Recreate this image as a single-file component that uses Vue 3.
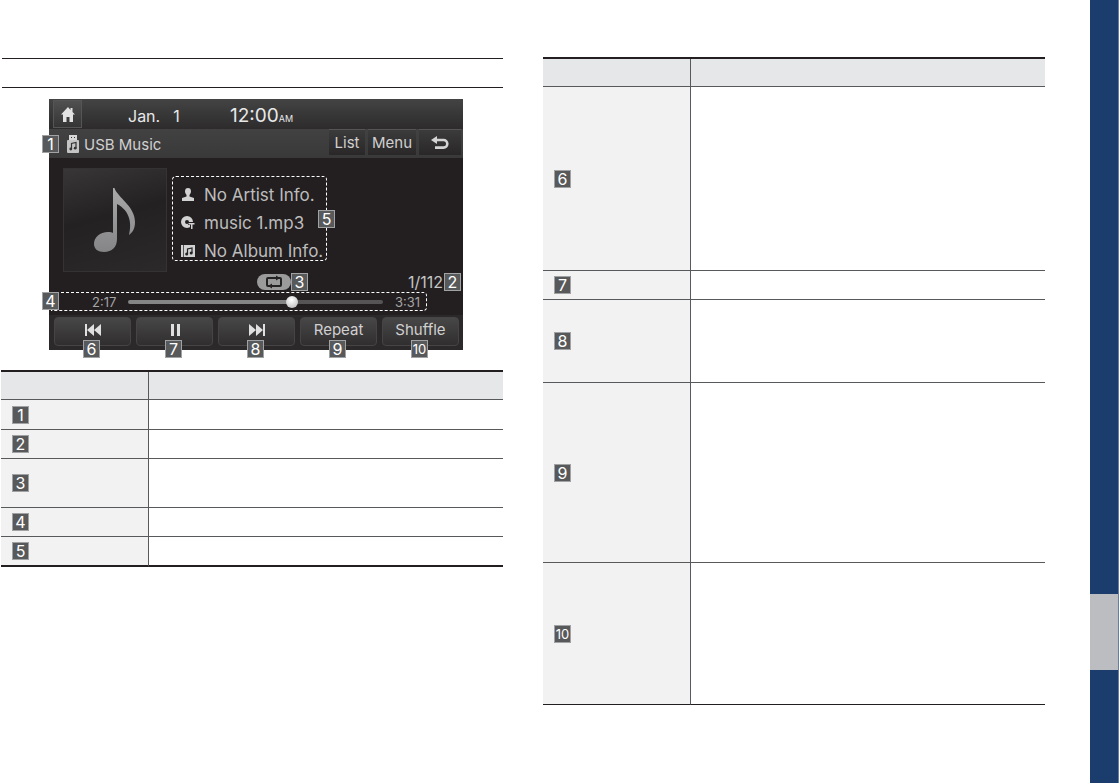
<template>
  <div class="page">
    <main class="content">
      <section class="column">
        <div class="heading"></div>

        <div class="screen">
          <header class="status">
            <button class="home" aria-label="Home">
              <svg width="14" height="15" viewBox="0 0 14 15"><path d="M7 0 0 7.500h2V15h3.500v-5h3v5H12V7.500h2L11.500 5V1H9.500v2z" fill="#e2e2e2" /></svg>
            </button>
            <span class="date"><span>Jan.</span><span>1</span></span>
            <span class="clock">12:00<small>AM</small></span>
          </header>

          <div class="source">
            <span class="badge on-edge">1</span>
            <svg width="12" height="18" viewBox="0 0 12 18">
              <path d="M2 0h8v5H2z" fill="#d8d8d8" />
              <path d="M4 2h1v1H4zM7 2h1v1H7z" fill="#333" />
              <rect y="5" width="12" height="13" rx="1" fill="#c4c4c4" />
              <path d="M4.500 14V8.500L9 7.500V13" fill="none" stroke="#333" stroke-width="1.200" />
              <circle cx="3.800" cy="14" r="1.400" fill="#333" /><circle cx="8.200" cy="13.200" r="1.400" fill="#333" />
            </svg>
            <span class="source-name">USB Music</span>
            <button class="tab list">List</button>
            <button class="tab menu">Menu</button>
            <button class="tab back" aria-label="Back">
              <svg width="18" height="14" viewBox="0 0 18 14"><path d="M4 4h8.500a3.800 3.800 0 0 1 0 7.600H4" fill="none" stroke="#d4d4d4" stroke-width="2.600" /><path d="M0 4 6 0v8z" fill="#d4d4d4" /></svg>
            </button>
          </div>

          <div class="now-playing">
            <div class="cover">
              <svg width="42" height="65" viewBox="0 0 42 65">
                <defs>
                  <linearGradient id="note" x1="0" y1="0" x2="0" y2="1"><stop offset="0" stop-color="#a9a9aa" /><stop offset="1" stop-color="#858587" /></linearGradient>
                </defs>
                <path d="M19 0h1.500C23 9 41 18 41 34c0 6-2 10-6 13 3-12 1-24-12-31v35c0 8-5 13-13 13C4 64 0 61 0 56c0-7 6-12 14-12 2 0 4 0 5 1z" fill="url(#note)" />
              </svg>
            </div>
            <ul class="info">
              <li>
                <svg width="14" height="14" viewBox="0 0 14 14"><path d="M4 3.500C4 1 5 0 7 0s3 1 3 3.500C10 5 9 6 8.500 7v1.500L13 10v3H1v-3l4.500-1.500V7C5 6 4 5 4 3.500z" fill="#d2d2d2" /></svg>
                No Artist Info.
              </li>
              <li>
                <svg width="14" height="14" viewBox="0 0 14 14"><circle cx="6" cy="6" r="4" fill="none" stroke="#d2d2d2" stroke-width="4" /><path d="M7 6h7v3h-2v5H9V9H7z" fill="#231f20" /><path d="M7.500 7h6v1.500h-2V13h-1.500V8.500H7.500z" fill="#d2d2d2" /></svg>
                music 1.mp3
                <span class="badge on-info">5</span>
              </li>
              <li>
                <svg width="14" height="14" viewBox="0 0 14 14"><path d="M0 1h14v12H0z" fill="#d2d2d2" /><path d="M2 1h1v12H2z" fill="#555" /><path d="M6.500 10V5L11 4v5" fill="none" stroke="#222" stroke-width="1.200" /><circle cx="5.700" cy="10" r="1.500" fill="#222" /><circle cx="10.200" cy="9" r="1.500" fill="#222" /></svg>
                No Album Info.
              </li>
            </ul>
          </div>

          <div class="track-state">
            <svg width="34" height="16" viewBox="0 0 34 16">
              <rect width="34" height="16" rx="8" fill="#9b9b9c" />
              <rect x="10" y="4" width="14" height="8" rx="1" fill="none" stroke="#242223" stroke-width="2" />
              <path d="M19 1.500v5l4-2.500zM15 9.500v5l-4-2.500z" fill="#242223" />
            </svg>
            <span class="badge">3</span>
            <span class="count">1/112</span>
            <span class="badge">2</span>
          </div>

          <div class="progress">
            <span class="badge on-progress">4</span>
            <span>2:17</span>
            <input v-model="position" type="range" min="0" max="211" aria-label="Playback position">
            <span>3:31</span>
          </div>

          <div class="controls">
            <button v-for="c in controls" :key="c.badge" :aria-label="c.name">
              <svg v-if="c.icon" width="16" height="14" viewBox="0 0 16 14"><path :d="c.icon" fill="#e0e0e0" /></svg>
              <template v-else>{{ c.name }}</template>
              <span class="badge on-control" :class="{ wide: c.badge > 9 }">{{ c.badge }}</span>
            </button>
          </div>
        </div>

        <table>
          <thead>
            <tr><th></th><th></th></tr>
          </thead>
          <tbody>
            <tr v-for="r in screenRows" :key="r.id" :style="{ height: r.height + 'px' }">
              <td><span class="badge">{{ r.id }}</span></td>
              <td></td>
            </tr>
          </tbody>
        </table>
      </section>

      <section class="column">
        <table class="thin-end">
          <thead>
            <tr><th></th><th></th></tr>
          </thead>
          <tbody>
            <tr v-for="r in controlRows" :key="r.id" :style="{ height: r.height + 'px' }">
              <td><span class="badge" :class="{ wide: r.id > 9 }">{{ r.id }}</span></td>
              <td></td>
            </tr>
          </tbody>
        </table>
      </section>
    </main>
    <aside class="edge"><div class="marker"></div></aside>
  </div>
</template>

<script setup>
import { ref } from 'vue'

const position = ref(137)

const controls = [
  { badge: 6, name: 'Previous', icon: 'M0 1h2v12H0zM9 1v12L2 7zM16 1v12L9 7z' },
  { badge: 7, name: 'Pause', icon: 'M4 1h3v12H4zM10 1h3v12h-3z' },
  { badge: 8, name: 'Next', icon: 'M0 1v12l7-6zM7 1v12l7-6zM14 1h2v12h-2z' },
  { badge: 9, name: 'Repeat' },
  { badge: 10, name: 'Shuffle' },
]

const screenRows = [
  { id: 1, height: 30 },
  { id: 2, height: 29 },
  { id: 3, height: 49 },
  { id: 4, height: 29 },
  { id: 5, height: 30 },
]

const controlRows = [
  { id: 6, height: 184 },
  { id: 7, height: 29 },
  { id: 8, height: 83 },
  { id: 9, height: 180 },
  { id: 10, height: 142 },
]
</script>

<style>
body { margin: 0; background: #fff; }
</style>

<style scoped>
* { box-sizing: border-box; }
.page {
  display: flex; min-height: 100vh;
  font-family: Inter, "Liberation Sans", sans-serif;
}
.content {
  flex: 1; display: grid; grid-template-columns: 1fr 1fr; gap: 40px;
  align-items: start; padding: 57px 45px 0 1px;
}
.heading {
  height: 30px; margin: 1px 0 11px 1px;
  border: solid #231f20; border-width: 1px 0;
}
.edge {
  display: flex; flex-direction: column; justify-content: flex-end;
  width: 29px; padding-bottom: 113px;
  background: #1b3d6d; border-right: 1px solid #6680a4;
}
.marker { height: 76px; background: #bbbdc0; }

.badge {
  display: flex; align-items: center; justify-content: center;
  width: 17px; height: 18px; flex: none;
  background: #58595b; border: 1px solid #a0a2a4;
  color: #fff; font-size: 16px; line-height: 16px;
}
.badge.wide { font-size: 13px; }

/* head unit */
.screen {
  display: flex; flex-direction: column;
  margin: 0 40px 20px 48px; background: #231f20; color: #d0d0d0;
}
button {
  display: flex; align-items: center; justify-content: center;
  margin: 0; padding: 0; border: 0; color: #d0d0d0; font: inherit; font-size: 15px;
}
.status {
  display: flex; align-items: center; height: 30px; padding-left: 4px;
  background: linear-gradient(#444, #2d2b2c); color: #e8e8e8;
}
.home {
  width: 29px; height: 28px;
  background: linear-gradient(#505051, #363536); border: 1px solid #555;
}
.date { display: flex; gap: 13px; width: 102px; margin-left: 46px; padding-top: 4px; font-size: 16px; }
.clock { padding-top: 2px; font-size: 19px; }
.clock small { font-size: 9px; }

.source {
  position: relative; display: flex; height: 29px; padding: 0 2px 0 18px;
  background: linear-gradient(#434243, #3a393a);
}
.source > svg { margin-top: 6px; }
.source-name { flex: 1; padding: 6px 0 0 5px; font-size: 15px; line-height: 20px; }
.on-edge { position: absolute; left: -7px; top: 6px; }
.tab { height: 26px; margin-left: 3px; background: linear-gradient(#3c3b3c, #292728); border-top: 1px solid #555; }
.list { width: 36px; }
.menu { width: 48px; }
.back { width: 42px; }

.now-playing { display: flex; align-items: flex-start; gap: 5px; padding: 10px 0 0 14px; }
.cover {
  display: flex; align-items: center; justify-content: center;
  width: 104px; height: 104px; border: 1px solid #343233;
  background: linear-gradient(165deg, #383637, #242122 45%, #2b292a);
}
.info {
  position: relative; display: flex; flex-direction: column; justify-content: center;
  width: 155px; height: 85px; margin: 8px 0 0; padding: 8px 0 0 8px;
  border: 1px dashed #fff; border-radius: 4px; list-style: none;
}
.info li {
  display: flex; align-items: center; gap: 9px;
  font-size: 17px; line-height: 28px; white-space: nowrap; color: #bcbcbd;
}
.on-info { position: absolute; right: -9px; top: 33px; }

.track-state { display: flex; align-items: center; height: 19px; padding: 0 2px 0 208px; }
.count { margin-left: auto; padding-right: 1px; font-size: 16px; color: #c4c4c4; }

.progress {
  position: relative; display: flex; align-items: center; gap: 12px;
  height: 19px; margin: 1px 36px 0 2px; padding: 0 6px 0 41px;
  border: 1px dashed #fff; border-left: 0; border-radius: 0 4px 4px 0;
  font-size: 13px; color: #a4a4a5;
}
.on-progress { position: absolute; left: -9px; top: -1px; }
input[type=range] {
  appearance: none; flex: 1; min-width: 0; height: 12px; margin: 0; background: none;
}
input[type=range]::-webkit-slider-runnable-track {
  height: 4px; border-radius: 2px;
  background: linear-gradient(90deg, #858586 64%, #565455 64%);
}
input[type=range]::-webkit-slider-thumb {
  appearance: none; width: 12px; height: 12px; margin-top: -4px; border-radius: 50%;
  background: radial-gradient(circle at 45% 35%, #fff, #b4b4b4);
}

.controls {
  display: grid; grid-template-columns: repeat(5, 1fr); gap: 5px;
  margin-top: 4px; padding: 2px 4px 4px 5px; background: #2b292a;
}
.controls button {
  position: relative; height: 29px; padding-bottom: 4px; border-radius: 4px;
  background: linear-gradient(#484748, #302e2f); border: 1px solid #464445;
}
.on-control { position: absolute; left: 28px; top: 22px; }

/* legend tables */
table {
  width: 100%; table-layout: fixed; border-spacing: 0;
  border-top: 2px solid #231f20;
}
th, td { padding: 0; border-bottom: 1px solid #58595b; }
th { height: 28px; background: #e6e7e8; }
th:first-child, td:first-child { width: 148px; border-right: 1px solid #58595b; }
td:first-child { padding-left: 11px; background: #f2f2f3; }
tbody tr:last-child td { border-bottom: 2px solid #231f20; }
.thin-end tbody tr:last-child td { border-bottom-width: 1px; }
</style>
